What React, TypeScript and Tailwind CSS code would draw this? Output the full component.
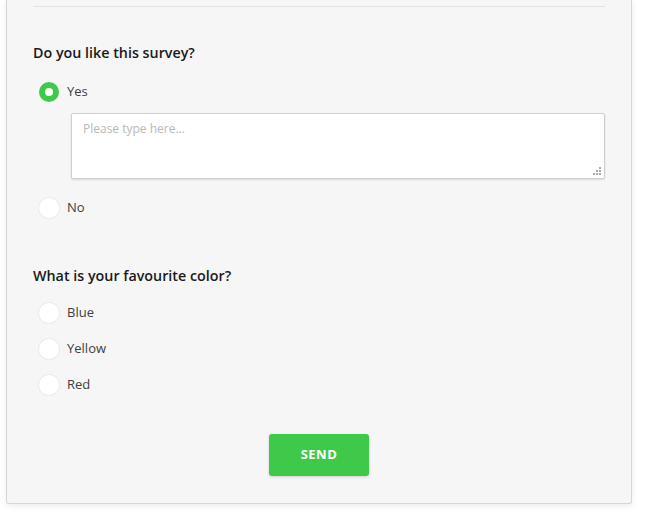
import React from "react";

function Radio({ checked, label }: { checked?: boolean; label: string }) {
  return (
    <div className="flex h-[36px] items-center">
      <div className="ml-[6px] flex h-[20px] w-[20px] items-center justify-center">
        {checked ? (
          <div className="flex h-[20px] w-[20px] items-center justify-center rounded-full bg-[#3fc94a]">
            <div className="h-[8px] w-[8px] rounded-full bg-white" />
          </div>
        ) : (
          <div className="h-[20px] w-[20px] rounded-full bg-white shadow-[0_0_0_1px_#ececec]" />
        )}
      </div>
      <span className="ml-[8px] text-[13px] text-[#404040]">{label}</span>
    </div>
  );
}

export default function App() {
  return (
    <div
      className="min-h-[516px] bg-white"
      style={{ fontFamily: '"Open Sans", sans-serif' }}
    >
      <div className="ml-[6px] w-[626px] rounded-b-[3px] border border-t-0 border-[#d6d6d6] bg-[#f6f6f6] pl-[26px] pr-[26px] shadow-[0_2px_6px_rgba(0,0,0,0.08)]">
        <div className="h-[7px] border-b border-[#e2e2e2]" />
        <div className="pt-[36px]">
          <div className="h-[20px] text-[14.3px] font-semibold leading-[20px] text-[#1a1a1a]">
            Do you like this survey?
          </div>
          <div className="mt-[11px]">
            <Radio checked label="Yes" />
            <div className="relative ml-[38px] mt-[3px] h-[66px] rounded-[2px] border border-[#cfcfcf] bg-white px-[11px] py-[6px] text-[12px] text-[#b8b8b8] shadow-[0_1px_2px_rgba(0,0,0,0.12)]">
              Please type here...
              <svg className="absolute bottom-[2px] right-[2px]" width="9" height="9" viewBox="0 0 9 9">
                <rect x="6" y="0" width="2" height="2" fill="#aaa" />
                <rect x="3" y="3" width="2" height="2" fill="#aaa" />
                <rect x="6" y="3" width="2" height="2" fill="#aaa" />
                <rect x="0" y="6" width="2" height="2" fill="#aaa" />
                <rect x="3" y="6" width="2" height="2" fill="#aaa" />
                <rect x="6" y="6" width="2" height="2" fill="#aaa" />
              </svg>
            </div>
            <div className="mt-[11px]">
              <Radio label="No" />
            </div>
          </div>
        </div>
        <div className="pt-[40px]">
          <div className="h-[20px] text-[14.3px] font-semibold leading-[20px] text-[#1a1a1a]">
            What is your favourite color?
          </div>
          <div className="mt-[9px]">
            <Radio label="Blue" />
            <Radio label="Yellow" />
            <Radio label="Red" />
          </div>
        </div>
        <div className="flex justify-center pt-[31px] pb-[27px]">
          <button className="h-[42px] w-[100px] rounded-[3px] bg-[#3fc94a] text-[13px] font-bold tracking-[0.5px] text-white shadow-[0_1px_3px_rgba(0,0,0,0.15)]">
            SEND
          </button>
        </div>
      </div>
    </div>
  );
}
